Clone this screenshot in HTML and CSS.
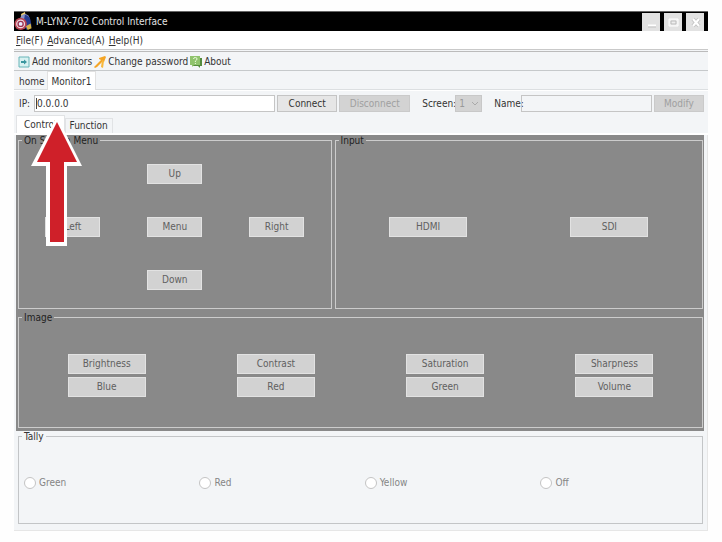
FILE: index.html
```html
<!DOCTYPE html>
<html lang="en">
<head>
<meta charset="utf-8">
<title>M-LYNX-702 Control Interface</title>
<link rel="stylesheet" href="styles.css">
</head>
<body>
<div class="window">
  <header class="titlebar">
    <svg class="app-icon" viewBox="0 0 18 20" aria-hidden="true">
      <path d="M7 2 11 0l1 4-5 2z" fill="#f0cf70"/>
      <ellipse cx="11" cy="8" rx="5" ry="6" fill="#8a93c4"/>
      <path d="M11 3q5 1 6 6l1 6-5 4-4-5z" fill="#253c91"/>
      <path d="m12 15 5-3 1 5-4 2z" fill="#d6b448"/>
      <circle cx="6.500" cy="12.500" r="6.500" fill="#b84250"/>
      <circle cx="6.500" cy="12.500" r="4.700" fill="#efdce0"/>
      <circle cx="6.500" cy="12.500" r="3.400" fill="#9c3150"/>
      <circle cx="6.500" cy="12.500" r="2" fill="#e8eaff"/>
    </svg>
    <h1 class="title">M-LYNX-702 Control Interface</h1>
    <div class="window-buttons">
      <button class="window-button" aria-label="Minimize"><svg viewBox="0 0 18 18"><path d="M6 12.500h8" stroke="#fff" stroke-width="2"/><path d="M6 14h8" stroke="#c2c2c2"/></svg></button>
      <button class="window-button" aria-label="Maximize"><svg viewBox="0 0 18 18"><path d="M5 6h9v7H5z" fill="#eee" stroke="#fff"/><path d="M7 8h5v3H7z" fill="none" stroke="#bbb"/></svg></button>
      <button class="window-button" aria-label="Close"><svg viewBox="0 0 18 18"><path d="m7 6 6 7m0-7-6 7" stroke="#c4c4c4" stroke-width="4"/><path d="m7 6 6 7m0-7-6 7" stroke="#fff" stroke-width="2"/></svg></button>
    </div>
  </header>
  <nav class="menubar">
    <button class="menu-item"><u>F</u>ile(F)</button>
    <button class="menu-item"><u>A</u>dvanced(A)</button>
    <button class="menu-item"><u>H</u>elp(H)</button>
  </nav>
  <div class="toolbar">
    <button class="tool"><svg viewBox="0 0 12 12"><path d="M1 1h10v10H1z" fill="#d8f1f1" stroke="#66b5b8"/><path d="M3 5h3V3.500L9 6 6 8.500V7H3z" fill="#3a969f"/></svg>Add monitors</button>
    <button class="tool"><svg viewBox="0 0 12 12"><path d="M5 2 11 0l1 1-2 5-2 0-5 5-2 1-1-1 5-5 2-2-2-1z" fill="#f4a526"/><path d="m8 4 2 1-1 7-2-1z" fill="#f8b83c"/></svg>Change password</button>
    <button class="tool"><svg viewBox="0 0 12 12"><path d="M3 2h9v8h-2v2L8 10H3z" fill="#548b3d"/><path d="M0 0h10v9H4l-2 2V9H0z" fill="#8fc36c"/><path d="M3.500 3q0-1.500 1.800-1.500T7 3q0 1-1.600 2v1M5.400 7v1" fill="none" stroke="#e9f8d9"/></svg>About</button>
  </div>
  <div class="page-tabs" role="tablist">
    <button class="page-tab" role="tab" aria-selected="false">home</button>
    <button class="page-tab" role="tab" aria-selected="true">Monitor1</button>
  </div>
  <form class="connection">
    <label class="label-ip" for="ip">IP:</label>
    <input class="field field-ip" id="ip" value="0.0.0.0">
    <button class="action" type="button">Connect</button>
    <button class="action action-wide" type="button" disabled>Disconnect</button>
    <label class="label-screen" for="screen">Screen:</label>
    <span class="select-wrap">
      <select class="screen-select" id="screen" disabled><option>1</option></select>
      <svg class="chevron" viewBox="0 0 8 6" aria-hidden="true"><path d="m1 1 3 3 3-3" fill="none" stroke="#aaa"/></svg>
    </span>
    <label class="label-name" for="name">Name:</label>
    <input class="field field-name" id="name" disabled>
    <button class="action action-modify" type="button" disabled>Modify</button>
  </form>
  <div class="sub-tabs" role="tablist">
    <button class="sub-tab" role="tab" aria-selected="true">Control</button>
    <button class="sub-tab" role="tab" aria-selected="false">Function</button>
  </div>
  <main class="panel">
    <div class="controls">
      <fieldset class="group">
        <legend>On Screen Menu</legend>
        <div class="dpad">
          <button class="key key-up" disabled>Up</button>
          <button class="key key-left" disabled>Left</button>
          <button class="key key-menu" disabled>Menu</button>
          <button class="key key-right" disabled>Right</button>
          <button class="key key-down" disabled>Down</button>
        </div>
      </fieldset>
      <fieldset class="group">
        <legend>Input</legend>
        <div class="inputs">
          <button class="key key-wide" disabled>HDMI</button>
          <button class="key key-wide" disabled>SDI</button>
        </div>
      </fieldset>
      <fieldset class="group group-image">
        <legend>Image</legend>
        <div class="image-keys">
          <button class="key key-wide" disabled>Brightness</button>
          <button class="key key-wide" disabled>Contrast</button>
          <button class="key key-wide" disabled>Saturation</button>
          <button class="key key-wide" disabled>Sharpness</button>
          <button class="key key-wide" disabled>Blue</button>
          <button class="key key-wide" disabled>Red</button>
          <button class="key key-wide" disabled>Green</button>
          <button class="key key-wide" disabled>Volume</button>
        </div>
      </fieldset>
    </div>
    <fieldset class="group group-tally">
      <legend>Tally</legend>
      <div class="tally">
        <label class="choice"><input type="radio" name="tally" disabled>Green</label>
        <label class="choice"><input type="radio" name="tally" disabled>Red</label>
        <label class="choice"><input type="radio" name="tally" disabled>Yellow</label>
        <label class="choice"><input type="radio" name="tally" disabled>Off</label>
      </div>
    </fieldset>
  </main>
  <svg class="pointer" viewBox="0 0 52 132" aria-hidden="true">
    <path d="M26 2 51 52H36v80H15V52H0z" fill="#fff"/>
    <path d="M26 8 46 48H33v80H19V48H6z" fill="#cf2029"/>
  </svg>
</div>
</body>
</html>
```
FILE: styles.css
```css
* {
  box-sizing: border-box;
}

body {
  margin: 11px 14px;
  background: #fefefe;
  color: #333;
  font-family: "DejaVu Sans Condensed", "Noto Sans", sans-serif;
  font-size: 10px;
  line-height: 12px;
}

button,
input,
select {
  margin: 0;
  padding: 0;
  border: 0;
  border-radius: 0;
  background: none;
  color: inherit;
  font: inherit;
}

.window {
  position: relative;
  background: #f3f5f7;
}

.titlebar {
  display: flex;
  align-items: center;
  height: 20px;
  padding-right: 4px;
  background: #000;
  border-top: 1px solid #666;
}

.app-icon {
  width: 18px;
  height: 19px;
}

.title {
  flex: 1;
  margin: 0 0 0 4px;
  color: #e4e4e4;
  font-size: 10px;
  font-weight: normal;
}

.window-buttons {
  display: flex;
  gap: 4px;
}

.window-button {
  width: 18px;
  height: 18px;
  background: #e2e2e2;
}

.window-button svg {
  display: block;
}

.menubar {
  display: flex;
  gap: 4px;
  height: 19px;
  padding: 2px 2px 0;
  background: #fff;
  border-bottom: 1px solid #c9c9c9;
}

.toolbar {
  display: flex;
  gap: 2px;
  height: 20px;
  margin-top: 1px;
  padding: 1px 0 0 4px;
  border-top: 1px solid #bbb;
  border-bottom: 1px solid #c6c9cb;
}

.tool {
  display: flex;
  align-items: center;
  gap: 2px;
}

.tool svg {
  width: 12px;
  height: 12px;
}

.page-tabs {
  display: flex;
  height: 19px;
  border-bottom: 1px solid #dcdfe1;
}

.page-tab {
  margin-top: 4px;
  padding: 0 2px 0 5px;
}

.page-tab[aria-selected="true"] {
  margin: 0 0 -1px;
  padding: 1px 4px 0;
  background: #fff;
  border: 1px solid #e1e1e1;
  border-bottom: 0;
}

.connection {
  display: flex;
  align-items: center;
  height: 26px;
  padding: 0 4px 0 5px;
  border-top: 1px solid #fff;
}

.label-ip {
  width: 15px;
}

.field {
  min-width: 0;
  height: 17px;
  padding: 0 2px;
  border: 1px solid #c5c5c5;
}

.field-ip {
  flex: 245;
  background: linear-gradient(#444, #444) 1px 2px / 1px 11px no-repeat #fff;
}

.field-name {
  flex: 130;
}

.action {
  width: 60px;
  height: 17px;
  margin-left: 2px;
  background: #e6e6e6;
  border: 1px solid #c4c4c4;
}

.action:disabled {
  background: #d3d3d3;
  border-color: #cacaca;
  color: #a0a0a0;
}

.action-wide {
  width: 71px;
}

.action-modify {
  width: 50px;
}

.label-screen {
  width: 33px;
  margin-left: 12px;
}

.select-wrap {
  position: relative;
  display: flex;
}

.screen-select {
  width: 27px;
  height: 17px;
  padding-left: 3px;
  appearance: none;
  background: #d3d3d3;
  border: 1px solid #c8c8c8;
  color: #999;
  opacity: 1;
}

.chevron {
  position: absolute;
  right: 3px;
  top: 6px;
  width: 8px;
  height: 6px;
}

.label-name {
  width: 27px;
  margin-left: 12px;
}

.sub-tabs {
  display: flex;
  align-items: flex-end;
  height: 19px;
  padding-left: 2px;
  border-bottom: 2px solid #fff;
}

.sub-tab {
  height: 15px;
  padding: 0 4px;
  border: 1px solid #e1e3e5;
  border-bottom: 0;
}

.sub-tab[aria-selected="true"] {
  height: 18px;
  padding: 0 7px;
  background: #fff;
}

.panel {
  padding: 0 3px 6px 2px;
  border: solid #e6e6e6;
  border-width: 0 1px 1px 0;
}

.controls {
  display: grid;
  grid-template-columns: 314fr 369fr;
  grid-template-rows: 174px 116px;
  gap: 3px;
  padding: 0 1px 3px 2px;
  background: #898989;
  color: #222;
}

.group {
  min-width: 0;
  margin: 0;
  padding: 0;
  border: 1px solid #ccc;
}

.group legend {
  margin-left: 3px;
  padding: 2px 2px 0;
  line-height: 8px;
}

.group-image {
  grid-column: 1 / -1;
}

.dpad {
  display: grid;
  grid-template: repeat(3, 53px) / repeat(3, 1fr);
  grid-template-areas: ". up ." "left menu right" ". down .";
  place-items: center;
  padding: 2px 3px 0;
}

.key {
  width: 55px;
  height: 20px;
  background: #d2d2d2;
  border: 1px solid #e2e2e2;
  color: #606060;
}

.key-wide {
  width: 78px;
}

.key-up {
  grid-area: up;
}

.key-left {
  grid-area: left;
}

.key-menu {
  grid-area: menu;
}

.key-right {
  grid-area: right;
}

.key-down {
  grid-area: down;
}

.inputs {
  display: grid;
  grid-template-columns: 1fr 1fr;
  place-items: center;
  height: 163px;
  padding: 0 2px;
}

.image-keys {
  display: grid;
  grid-template-columns: repeat(4, 1fr);
  gap: 3px 0;
  justify-items: center;
  padding: 32px 3px 0;
}

.group-tally {
  margin: 0 1px 0 2px;
  border-color: #c3c5c7;
}

.tally {
  display: flex;
  align-items: center;
  height: 82px;
  padding: 2px 0 0 5px;
}

.choice {
  display: flex;
  align-items: center;
  gap: 3px;
  margin-right: auto;
  color: #858585;
}

.choice input {
  width: 12px;
  height: 12px;
  appearance: none;
  background: #fff;
  border: 1px solid #c4c4c4;
  border-radius: 50%;
}

.pointer {
  position: absolute;
  left: 17px;
  top: 103px;
  width: 52px;
  height: 132px;
}
```
